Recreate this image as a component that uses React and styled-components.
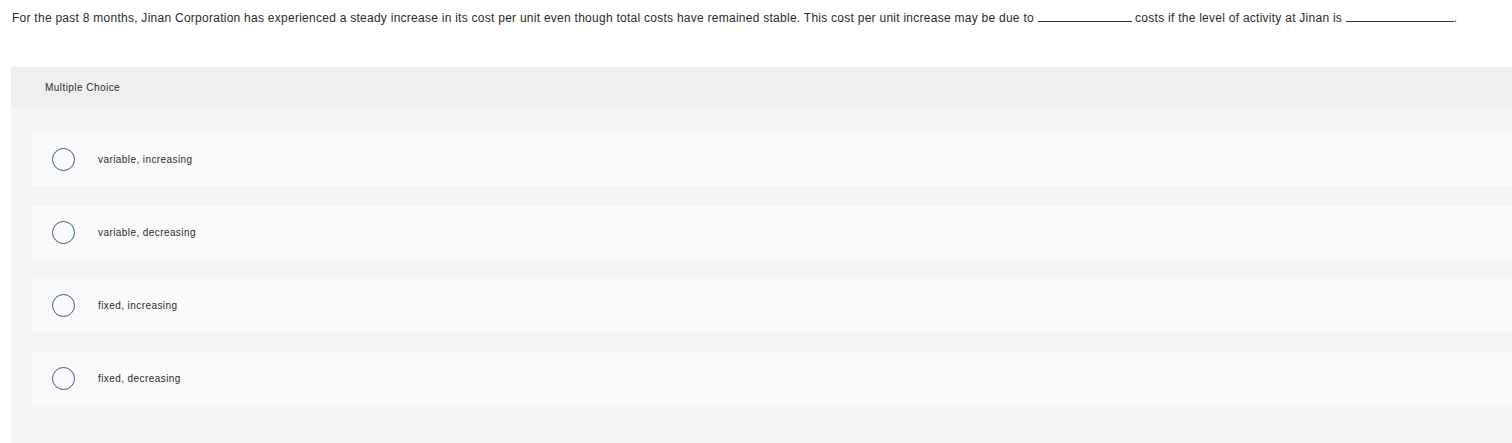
import React from "react";
import styled, { createGlobalStyle } from "styled-components";

const GlobalStyle = createGlobalStyle`
  body {
    margin: 0;
    background: #ffffff;
    font-family: "Liberation Sans", Arial, sans-serif;
    color: #333333;
    overflow: hidden;
  }
`;

const options = [
  "variable, increasing",
  "variable, decreasing",
  "fixed, increasing",
  "fixed, decreasing",
];

const App = () => {
  return (
    <Page>
      <GlobalStyle />
      <Question>
        For the past 8 months, Jinan Corporation has experienced a steady
        increase in its cost per unit even though total costs have remained
        stable. This cost per unit increase may be due to <Blank w={94} />{" "}
        costs if the level of activity at Jinan is <Blank w={108} />.
      </Question>
      <Panel>
        <PanelHeader>Multiple Choice</PanelHeader>
        <Choices>
          {options.map((opt) => (
            <Choice key={opt}>
              <Radio />
              <ChoiceLabel>{opt}</ChoiceLabel>
            </Choice>
          ))}
        </Choices>
      </Panel>
    </Page>
  );
};

const Page = styled.div`
  width: 1512px;
  height: 443px;
  overflow: hidden;
`;

const Question = styled.p`
  margin: 0;
  padding: 11px 0 0 12px;
  font-size: 12px;
  line-height: 14px;
  letter-spacing: 0.26px;
  color: #2b2b2b;
  white-space: nowrap;
`;

const Blank = styled.span`
  display: inline-block;
  width: ${(p) => p.w}px;
  border-bottom: 1px solid #333;
  vertical-align: baseline;
`;

const Panel = styled.div`
  margin: 42px 0 0 11px;
  width: 1540px;
  background: #f4f4f4;
`;

const PanelHeader = styled.div`
  height: 40px;
  display: flex;
  align-items: center;
  padding-left: 34px;
  background: #efefef;
  font-size: 10px;
  letter-spacing: 0.45px;
  color: #2b2b2b;
`;

const Choices = styled.div`
  display: flex;
  flex-direction: column;
  gap: 20px;
  padding: 26px 0 40px 21px;
`;

const Choice = styled.div`
  height: 53px;
  display: flex;
  align-items: center;
  padding-left: 20px;
  background: #fafafa;
`;

const Radio = styled.span`
  width: 21px;
  height: 21px;
  border: 1.5px solid #2a5f92;
  border-radius: 50%;
  flex-shrink: 0;
`;

const ChoiceLabel = styled.span`
  margin-left: 23px;
  font-size: 10px;
  letter-spacing: 0.42px;
  color: #2b2b2b;
`;

export default App;
